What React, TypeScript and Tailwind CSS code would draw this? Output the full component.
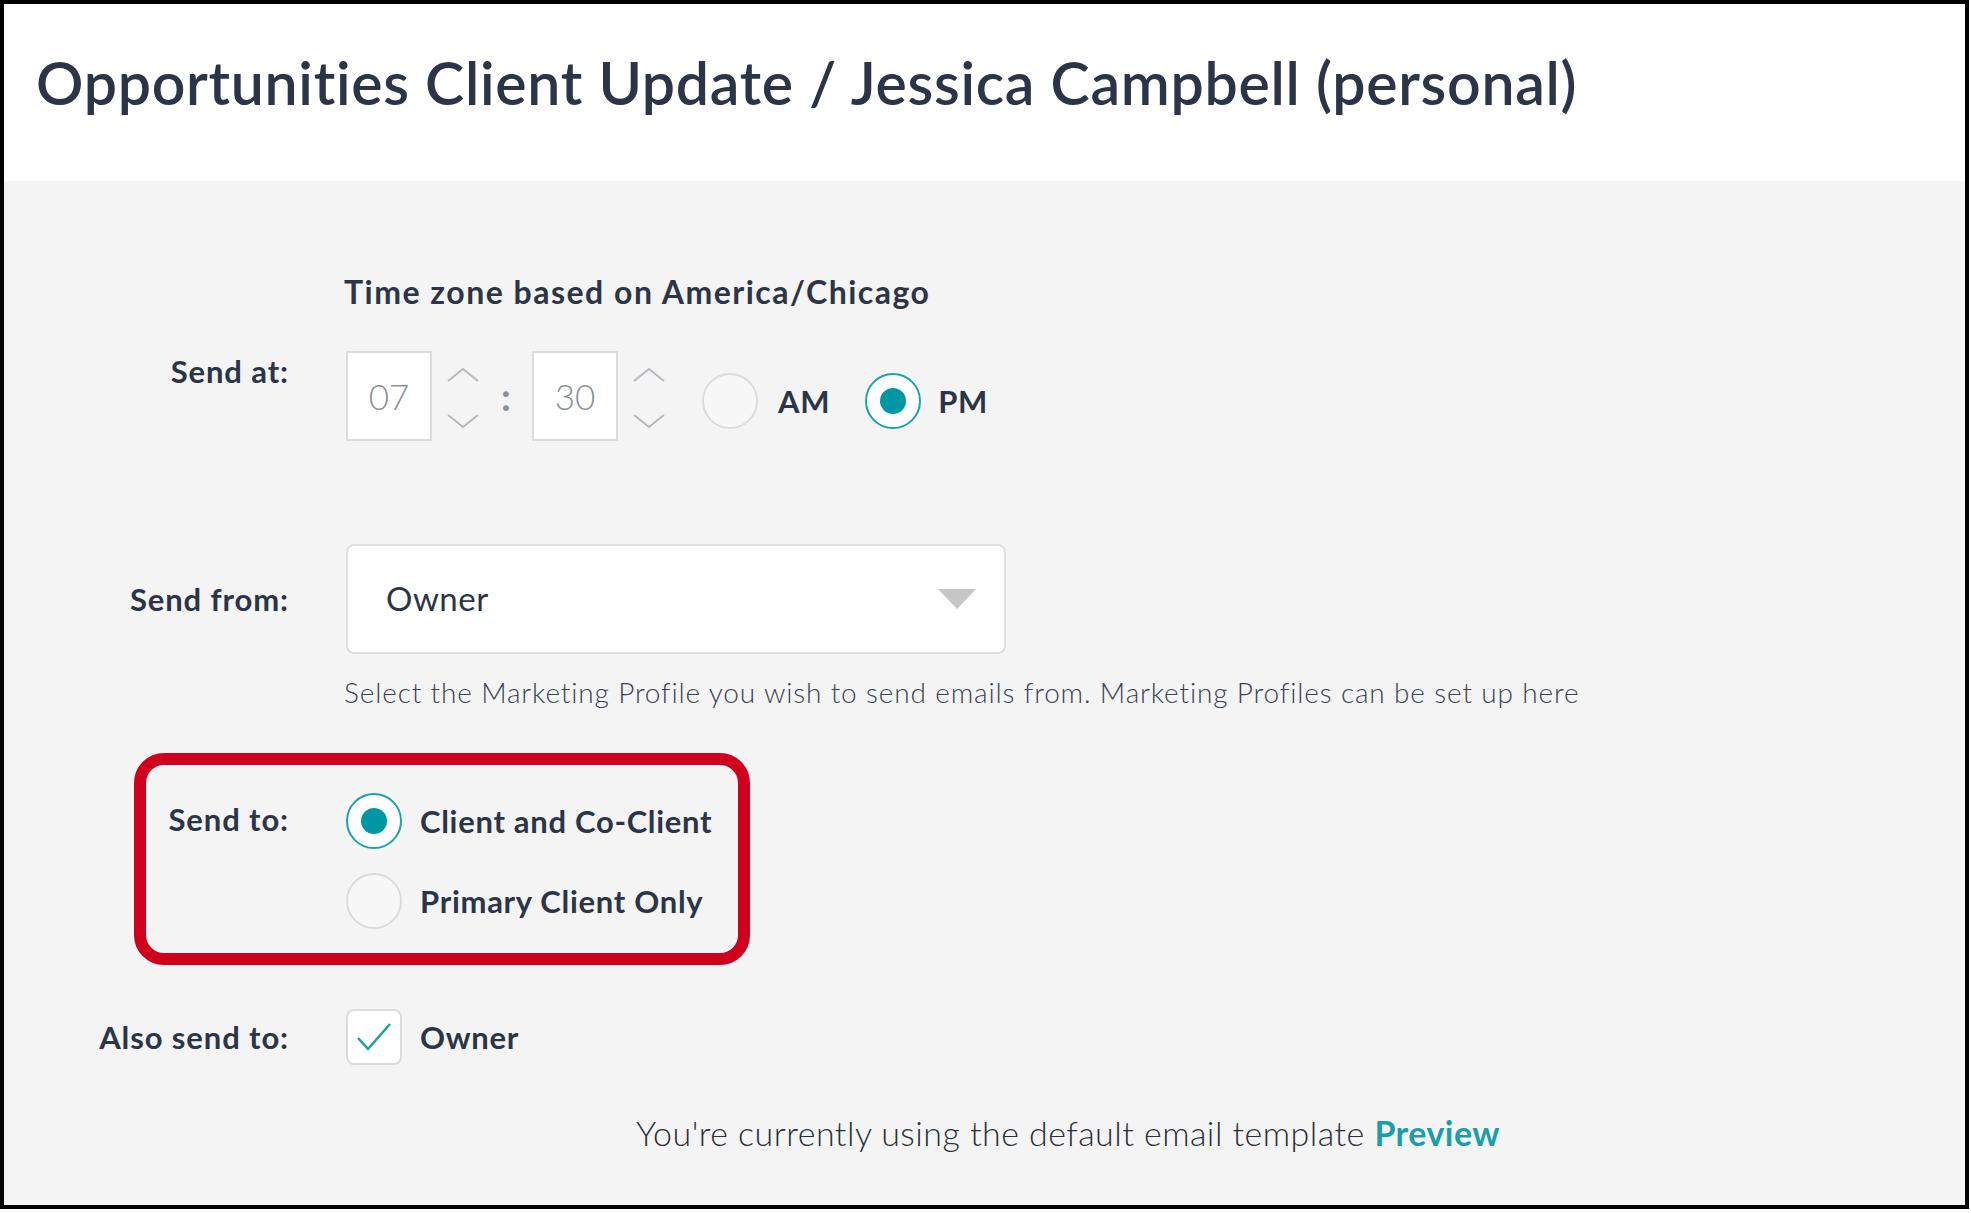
import React from "react";

const font = { fontFamily: "Lato, 'Noto Sans', sans-serif" };

function Chevrons() {
  return (
    <div className="flex flex-col justify-between w-[34px] h-[62px] mt-[16px]">
      <svg width="34" height="16" viewBox="0 0 34 16" fill="none">
        <path d="M2 14 L17 2 L32 14" stroke="#b5b9bf" strokeWidth="2" />
      </svg>
      <svg width="34" height="16" viewBox="0 0 34 16" fill="none">
        <path d="M2 2 L17 14 L32 2" stroke="#b5b9bf" strokeWidth="2" />
      </svg>
    </div>
  );
}

function Radio({ checked }: { checked?: boolean }) {
  return (
    <div
      className={
        "w-[56px] h-[56px] rounded-full border-2 flex items-center justify-center shrink-0 " +
        (checked ? "border-[#1aa3ad] bg-white" : "border-[#d8dce1] bg-[#f7f7f7]")
      }
    >
      {checked && <div className="w-[26px] h-[26px] rounded-full bg-[#0097a4]" />}
    </div>
  );
}

function Label({ children }: { children: React.ReactNode }) {
  return (
    <div className="w-[285px] text-right text-[31px] tracking-[0.9px] font-bold text-[#2c3547] leading-[40px] shrink-0">
      {children}
    </div>
  );
}

const optionText = "text-[31px] tracking-[0.7px] font-bold text-[#2c3547]";

export default function App() {
  return (
    <div className="bg-white w-[1971px] h-[1213px]" style={font}>
      <div className="relative w-[1969px] h-[1209px] border-[4px] border-black bg-[#f4f4f4] flex flex-col">
        <div className="h-[177px] bg-white flex items-center pl-[32px] pb-[18px]">
          <h1 className="text-[59px] font-semibold text-[#2c3547] tracking-[0.7px]">
            Opportunities Client Update / Jessica Campbell (personal)
          </h1>
        </div>

        <div className="pt-[93px]">
          <div className="pl-[340px] text-[32px] leading-[36px] tracking-[1.5px] font-bold text-[#2c3547]">
            Time zone based on America/Chicago
          </div>

          {/* Send at */}
          <div className="flex items-start mt-[41px]">
            <Label>Send at:</Label>
            <div className="flex items-start ml-[57px]">
              <div className="w-[86px] h-[90px] bg-white border-2 border-[#dcdcdc] flex items-center justify-center text-[35px] font-light text-[#8a9099]">
                07
              </div>
              <div className="ml-[14px]">
                <Chevrons />
              </div>
              <div className="w-[52px] h-[90px] flex items-center justify-center text-[38px] font-bold text-[#8a9099]">
                :
              </div>
              <div className="w-[86px] h-[90px] bg-white border-2 border-[#dcdcdc] flex items-center justify-center text-[35px] font-light text-[#8a9099]">
                30
              </div>
              <div className="ml-[14px]">
                <Chevrons />
              </div>
              <div className="flex items-center h-[90px] mt-[5px] ml-[36px]">
                <Radio />
                <span className={"ml-[20px] " + optionText}>AM</span>
                <div className="ml-[35px]">
                  <Radio checked />
                </div>
                <span className={"ml-[17px] " + optionText}>PM</span>
              </div>
            </div>
          </div>

          {/* Send from */}
          <div className="flex items-center mt-[98px]">
            <Label>Send from:</Label>
            <div className="ml-[57px] w-[660px] h-[110px] bg-white border-2 border-[#dcdfe3] rounded-[8px] flex items-center justify-between pl-[38px] pr-[28px]">
              <span className="text-[33px] tracking-[0.5px] text-[#2c3547]">Owner</span>
              <svg width="38" height="20" viewBox="0 0 38 20">
                <polygon points="0,0 38,0 19,20" fill="#c6c6c6" />
              </svg>
            </div>
          </div>
          <div className="pl-[340px] mt-[20px] text-[28px] leading-[36px] tracking-[0.85px] font-light text-[#3a4254]">
            Select the Marketing Profile you wish to send emails from. Marketing Profiles can be set up here
          </div>

          {/* Send to */}
          <div className="flex items-start mt-[83px]">
            <div className="mt-[6px]">
              <Label>Send to:</Label>
            </div>
            <div className="ml-[57px] flex flex-col gap-[24px]">
              <div className="flex items-center">
                <Radio checked />
                <span className={"ml-[18px] " + optionText}>Client and Co-Client</span>
              </div>
              <div className="flex items-center">
                <Radio />
                <span className={"ml-[18px] " + optionText}>Primary Client Only</span>
              </div>
            </div>
          </div>

          {/* Also send to */}
          <div className="flex items-center mt-[80px]">
            <Label>Also send to:</Label>
            <div className="ml-[57px] w-[56px] h-[56px] bg-white border-2 border-[#d8dce1] rounded-[8px] flex items-center justify-center">
              <svg width="38" height="32" viewBox="0 0 38 32" fill="none">
                <path d="M3 17 L13 28 L35 3" stroke="#1a9fa9" strokeWidth="2.5" />
              </svg>
            </div>
            <span className={"ml-[18px] " + optionText}>Owner</span>
          </div>

          <div className="pl-[632px] mt-[48px] text-[34px] leading-[40px] tracking-[0.45px] font-light text-[#2a2f38]">
            You're currently using the default email template{" "}
            <span className="font-bold text-[#1a9fa9]">Preview</span>
          </div>
        </div>

        {/* annotation box */}
        <div className="absolute left-[130px] top-[749px] w-[616px] h-[212px] border-[12px] border-[#d0011f] rounded-[30px]" />
      </div>
    </div>
  );
}
